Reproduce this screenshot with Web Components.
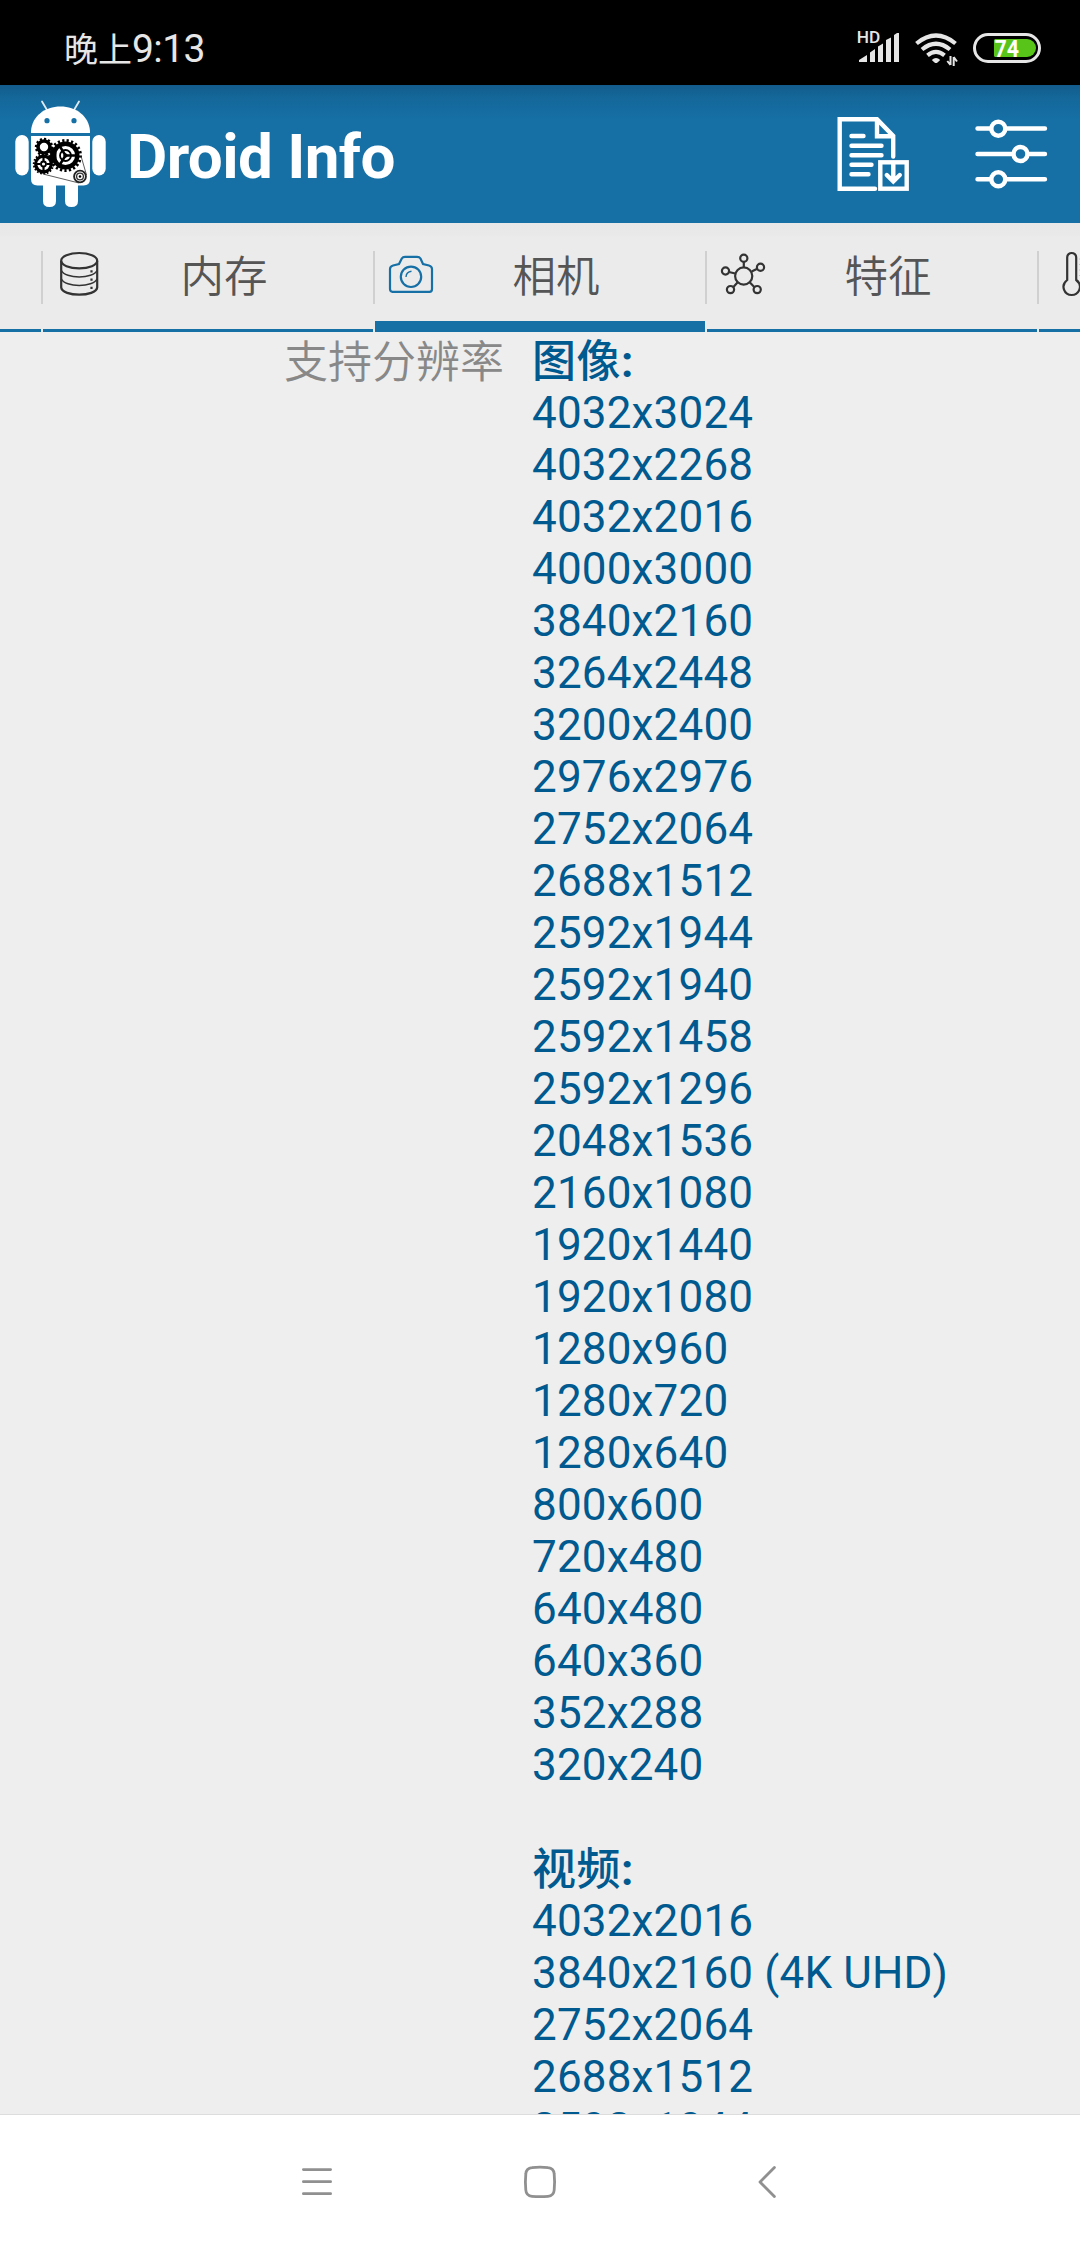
<!DOCTYPE html>
<html lang="zh-CN">
<head>
<meta charset="utf-8">
<title>Droid Info</title>
<style>
	body {
		margin: 0;
		width: 1080px;
		height: 2244px;
		overflow: hidden;
		font-family: Roboto, "Noto Sans CJK SC", sans-serif;
	}
</style>
</head>
<body>
<droid-app></droid-app>

<script>
function template(html) {
	const t = document.createElement("template");
	t.innerHTML = html;
	return t;
}

class BaseElement extends HTMLElement {
	constructor() {
		super();
		this.attachShadow({mode: "open"});
		this.shadowRoot.appendChild(this.constructor.template.content.cloneNode(true));
	}
}

class StatusBar extends BaseElement {
	static template = template(`
		<style>
			:host {
				display: flex;
				align-items: center;
				justify-content: space-between;
				box-sizing: border-box;
				height: 85px;
				padding: 13px 38px 0 64px;
				background: #000;
				color: #e6e6e6;
			}
			#time {
				display: flex;
				align-items: baseline;
				margin-top: -3px;
				font-size: 34px;
			}
			#clock {
				font-size: 39px;
				letter-spacing: -.6px;
			}
			svg {
				display: block;
				height: 40px;
			}
			#icons {
				display: flex;
				gap: 14px;
			}
			text {
				font-family: Roboto, sans-serif;
			}
		</style>
		<div id="time"><span>晚上</span><span id="clock">9:13</span></div>
		<div id="icons">
			<svg width="44" viewBox="857 29 44 40" fill="#e6e6e6">
				<text x="856.700" y="43" font-size="16.500" font-weight="500" textLength="23.500" lengthAdjust="spacingAndGlyphs">HD</text>
				<path d="M859 62V60L867 55V62ZM870 62V52.500L875 49V62ZM878 62V46.500L883 43.500V62ZM886 62V40L891 37.500V62ZM894 62V35L897 33H899V62Z"/>
			</svg>
			<svg width="44" viewBox="915 29 44 40" fill="none" stroke="#e6e6e6" stroke-width="4.200">
				<path d="M916.500 43.500Q936 27.500 955.500 43.500M922 49.500Q936 38 950 49.500M927.500 55.300Q936 48.500 944.500 55.300"/>
				<path d="M931.800 60Q936 56 940.200 60L937.500 62.600Q936 63.600 934.500 62.600Z" fill="#e6e6e6" stroke="none"/>
				<path d="M950.500 56V65M950.500 65L947.300 61M953.700 66V57M953.700 57L957 61.500" stroke-width="2"/>
			</svg>
			<svg width="69" viewBox="973 29 69 40">
				<rect x="974.500" y="34.500" width="65" height="27" rx="13.500" fill="none" stroke="#e6e6e6" stroke-width="3"/>
				<path d="M995.500 39H1027A9 9 0 0 1 1027 57H995.500Q994 57 994 55.500V40.500Q994 39 995.500 39Z" fill="#58c41a"/>
				<text x="994.500" y="57" font-size="24.500" font-weight="700" fill="#fff" textLength="24.500" lengthAdjust="spacingAndGlyphs">74</text>
			</svg>
		</div>
	`);
}

class DroidLogo extends BaseElement {
	static template = template(`
		<style>
			:host, svg {
				display: block;
			}
		</style>
		<svg width="92" height="110" viewBox="15 99 92 110">
			<g fill="#fff">
				<path d="M42 101.500L47 110M79 101.500L74 110" stroke="#dfeaf2" stroke-width="1.800" stroke-linecap="round"/>
				<path d="M31 133V131C32 116 45 106.500 60.500 106.500S89 116 90 131V133Z"/>
				<path d="M31 136H90V179Q90 185.500 83.500 185.500H78V201Q78 207 71.500 207T65 201V185.500H56V201Q56 207 49.500 207T43 201V185.500H37.500Q31 185.500 31 179Z"/>
				<rect x="15.300" y="135" width="13.400" height="40.500" rx="6.700"/>
				<rect x="92.300" y="135" width="13.400" height="40.500" rx="6.700"/>
			</g>
			<g fill="#1670a6">
				<circle cx="47" cy="120.700" r="2.600"/>
				<circle cx="74" cy="120.700" r="2.600"/>
			</g>
			<g fill="none" stroke="#000">
				<!-- small gear -->
				<circle cx="44" cy="147" r="6" stroke-width="3.600"/>
				<circle cx="44" cy="147" r="8" stroke-width="2.400" pathLength="24" stroke-dasharray="1 1"/>
				<!-- main gear -->
				<circle cx="65.500" cy="155.500" r="11.800" stroke-width="4.400"/>
				<circle cx="65.500" cy="155.500" r="15" stroke-width="3" pathLength="42" stroke-dasharray="1 1"/>
				<circle cx="65.500" cy="155.500" r="5.500" stroke-width="1.800"/>
				<circle cx="65.500" cy="155.500" r="1.700" fill="#000"/>
				<path d="M65.500 155.500L59 145M65.500 155.500H78M65.500 155.500L59 166" stroke-width="2.500"/>
				<path d="M51 149L56 150V161L50 164Z" fill="#000"/>
				<!-- lower gear -->
				<circle cx="43.500" cy="164" r="7.800" stroke-width="3.200"/>
				<circle cx="43.500" cy="164" r="9.700" stroke-width="2" pathLength="36" stroke-dasharray="1 1"/>
				<circle cx="43.500" cy="164" r="2.500" stroke-width="1.800"/>
				<path d="M43.500 156V161M43.500 167V172M35.500 164H40.500M46.500 164H51.500" stroke-width="2.200"/>
				<!-- pulley and belt -->
				<circle cx="80" cy="176.500" r="5.900" stroke="#222" stroke-width="1.900"/>
				<circle cx="80" cy="176.500" r="3.400" stroke="#333" stroke-width="1.300"/>
				<circle cx="80" cy="176.500" r="1.300" fill="#000" stroke="none"/>
				<path d="M81 156L86.500 175M43 174L79 183" stroke="#333" stroke-width=".8"/>
			</g>
		</svg>
	`);
}

class AppBar extends BaseElement {
	static template = template(`
		<style>
			:host {
				display: flex;
				align-items: center;
				box-sizing: border-box;
				height: 138px;
				padding: 0 32px 0 15px;
				background: linear-gradient(#125c8c 0, #146799 12px, #1670a6 36px);
				color: #fff;
			}
			h1 {
				flex: 1;
				margin: 6px 0 0 20px;
				font-size: 62px;
				line-height: 72px;
				font-weight: 700;
				letter-spacing: -.6px;
			}
			svg {
				display: block;
				fill: none;
				stroke: #fff;
				stroke-width: 4.4px;
				stroke-linecap: round;
			}
			#actions {
				display: flex;
				gap: 64px;
			}
		</style>
		<droid-logo></droid-logo>
		<h1><slot></slot></h1>
		<div id="actions">
			<svg width="74" height="76" viewBox="836 116 74 76">
				<path d="M875 188.700H839.700V119.300H877L893.200 136V156.500M877 120V136.300H892"/>
				<path d="M851.500 136H863.500M851.500 145.700H881.500M851.500 155.200H881.500M851.500 164.800H871.500M851.500 174.300H868.500"/>
				<rect x="880.300" y="162.300" width="26.400" height="26.400"/>
				<path d="M893.300 163V180M886.800 175L893.300 181.500L899.800 175"/>
			</svg>
			<svg width="74" height="76" viewBox="974 116 74 76">
				<path d="M977.500 128.500H991M1006 128.500H1045M977.500 154H1013M1028 154H1045M977.500 179.300H991M1006 179.300H1045"/>
				<circle cx="998.300" cy="128.700" r="7"/>
				<circle cx="1020.500" cy="154" r="7"/>
				<circle cx="998.300" cy="179.300" r="7"/>
			</svg>
		</div>
	`);
}

class TabItem extends BaseElement {
	static template = template(`
		<style>
			:host {
				flex: 0 0 330px;
				display: flex;
				align-items: center;
				box-sizing: border-box;
				height: 109px;
				padding: 0 29px 0 17px;
				border-bottom: 3px solid #1670a6;
				color: #555;
				font-size: 43.5px;
				font-weight: 350;
			}
			:host([selected]) {
				border-bottom-width: 11px;
			}
			:host([cut]) {
				flex-basis: 41px;
				padding-right: 0;
				overflow: hidden;
			}
			#icon {
				flex: 0 0 44px;
				height: 44px;
				margin-top: -4px;
			}
			:host([selected]) #icon {
				margin-top: 4px;
			}
			#label {
				flex: 1;
				text-align: center;
				line-height: 52px;
				margin-top: 4px;
			}
			:host([selected]) #label {
				margin-top: 12px;
			}
		</style>
		<div id="icon"><slot name="icon"></slot></div>
		<div id="label"><slot></slot></div>
	`);
}

class TabStrip extends BaseElement {
	static template = template(`
		<style>
			:host {
				display: flex;
				height: 109px;
				overflow: hidden;
				background: linear-gradient(#e8e8e8 0, #e9e9e9 12px, #ebebeb 14px);
			}
			::slotted(hr) {
				flex: 0 0 2px;
				height: 53px;
				margin: 28px 0 0;
				border: 0;
				background: #d0d0d0;
			}
		</style>
		<slot></slot>
	`);
}

class ResolutionList extends BaseElement {
	static template = template(`
		<style>
			:host {
				display: block;
			}
			h2, div {
				margin: 0;
				font-size: 44px;
				line-height: 52px;
				height: 52px;
				letter-spacing: .17px;
				white-space: nowrap;
			}
			h2 {
				font-weight: 500;
				line-height: 54px;
				letter-spacing: .5px;
			}
		</style>
		<h2><span></span><b>:</b></h2>
	`);

	connectedCallback() {
		this.shadowRoot.querySelector("span").textContent = this.getAttribute("heading");
		this.getAttribute("sizes").split(",").forEach(size => {
			const row = document.createElement("div");
			row.textContent = size;
			this.shadowRoot.appendChild(row);
		});
	}
}

class InfoRow extends BaseElement {
	static template = template(`
		<style>
			:host {
				flex: 1;
				min-height: 0;
				overflow: hidden;
				display: flex;
				gap: 28px;
				padding-top: 3px;
				background: #eee;
				color: #005a8f;
			}
			#label {
				flex: 0 0 504px;
				margin-top: 2px;
				text-align: right;
				color: #888;
				font-size: 44px;
				line-height: 52px;
				font-weight: 350;
			}
			#value {
				display: flex;
				flex-direction: column;
				gap: 52px;
			}
		</style>
		<div id="label"><slot name="label"></slot></div>
		<div id="value"><slot></slot></div>
	`);
}

class NavBar extends BaseElement {
	static template = template(`
		<style>
			:host {
				display: flex;
				justify-content: space-between;
				align-items: center;
				box-sizing: border-box;
				height: 130px;
				padding: 5px 303px 0 301px;
				border-top: 1px solid #ddd;
				background: #fff;
			}
			svg {
				display: block;
				fill: none;
				stroke: #909090;
				stroke-width: 2.8px;
				stroke-linecap: round;
				stroke-linejoin: round;
			}
			#home {
				margin-right: 10px;
			}
		</style>
		<svg width="32" height="34" viewBox="301 2165 32 34">
			<path d="M303.400 2169.600H330.600M303.400 2181.700H330.600M303.400 2193.700H330.600"/>
		</svg>
		<svg id="home" width="34" height="34" viewBox="523 2165 34 34">
			<path d="M532 2167.600Q540 2166.800 548 2167.600Q553.800 2168 554.200 2174Q555 2182 554.200 2190Q553.800 2195.900 548 2196.300Q540 2197.100 532 2196.300Q526.200 2195.900 525.800 2190Q525 2182 525.800 2174Q526.200 2168 532 2167.600Z"/>
		</svg>
		<svg width="20" height="34" viewBox="757 2165 20 34">
			<path d="M774.400 2167.400L760 2182L774.400 2196.600"/>
		</svg>
	`);
}

class DroidApp extends BaseElement {
	static template = template(`
		<style>
			:host {
				display: flex;
				flex-direction: column;
				height: 2244px;
			}
			svg {
				display: block;
				width: 44px;
				height: 44px;
				overflow: visible;
				fill: none;
				stroke: #333;
				stroke-width: 2.2px;
			}
			svg.active {
				stroke: #1670a6;
			}
		</style>
		<status-bar></status-bar>
		<app-bar>Droid Info</app-bar>
		<tab-strip>
			<tab-item cut></tab-item>
			<hr>
			<tab-item>
				<svg slot="icon" viewBox="0 0 44 44">
					<ellipse cx="19.200" cy="8.700" rx="18" ry="7.700"/>
					<path d="M1.200 9V35.500C2.400 45 36 45 37.200 35.500V9"/>
					<path d="M1.400 18.500C5 27 33.400 27 37 18.500M1.400 27C5 35.500 33.400 35.500 37 27" stroke-width="1.500"/>
					<path d="M31.500 18.200V20.500M31.500 26.500V28.800M31.500 34.800V37.100"/>
				</svg>
				内存
			</tab-item>
			<hr>
			<tab-item selected>
				<svg slot="icon" class="active" viewBox="3 0 44 44">
					<path d="M4 13.500L10 12L12.800 6.500Q13.800 4.800 16 4.800H28Q30.500 4.800 31.500 6.500L34 12L40 13.500Q43 14.300 43 17V37Q43 39.800 40.500 39.800H3.500Q1 39.800 1 37V17Q1 14.300 4 13.500Z"/>
					<circle cx="22" cy="24.800" r="10.200"/>
					<path d="M17 25Q17.300 20 22.500 19.300" stroke-width="1.400"/>
				</svg>
				相机
			</tab-item>
			<hr>
			<tab-item>
				<svg slot="icon" viewBox="2.800 0 44 44">
					<circle cx="22.500" cy="24" r="8.600"/>
					<circle cx="22.600" cy="6.200" r="3.600"/>
					<circle cx="4.300" cy="19" r="3.600"/>
					<circle cx="39.300" cy="15.200" r="3.600"/>
					<circle cx="9.300" cy="37.600" r="3.600"/>
					<circle cx="36" cy="37.600" r="3.600"/>
					<path d="M22.600 9.800V15.400M7.800 20L14 21.500M36 16.800L30.500 19.500M12 35.200L16.500 30.300M33.300 35.200L28.500 30.300"/>
				</svg>
				特征
			</tab-item>
			<hr>
			<tab-item cut>
				<svg slot="icon" viewBox="0 0 44 44">
					<path d="M11.200 28V5.500C11.200-.5 20.200-.5 20.200 5.500V28C27.500 33.500 23 43 15.700 43S4 33.500 11.200 28Z"/>
					<path d="M23.500 7H29M23.500 12.500H29M23.500 18H29M23.500 23.500H29" stroke="#999" stroke-width="1"/>
				</svg>
			</tab-item>
		</tab-strip>
		<info-row>
			<span slot="label">支持分辨率</span>
			<resolution-list heading="图像" sizes="4032x3024,4032x2268,4032x2016,4000x3000,3840x2160,3264x2448,3200x2400,2976x2976,2752x2064,2688x1512,2592x1944,2592x1940,2592x1458,2592x1296,2048x1536,2160x1080,1920x1440,1920x1080,1280x960,1280x720,1280x640,800x600,720x480,640x480,640x360,352x288,320x240"></resolution-list>
			<resolution-list heading="视频" sizes="4032x2016,3840x2160 (4K UHD),2752x2064,2688x1512,2592x1944"></resolution-list>
		</info-row>
		<nav-bar></nav-bar>
	`);
}

window.customElements.define("status-bar", StatusBar);
window.customElements.define("droid-logo", DroidLogo);
window.customElements.define("app-bar", AppBar);
window.customElements.define("tab-item", TabItem);
window.customElements.define("tab-strip", TabStrip);
window.customElements.define("resolution-list", ResolutionList);
window.customElements.define("info-row", InfoRow);
window.customElements.define("nav-bar", NavBar);
window.customElements.define("droid-app", DroidApp);
</script>
</body>
</html>
